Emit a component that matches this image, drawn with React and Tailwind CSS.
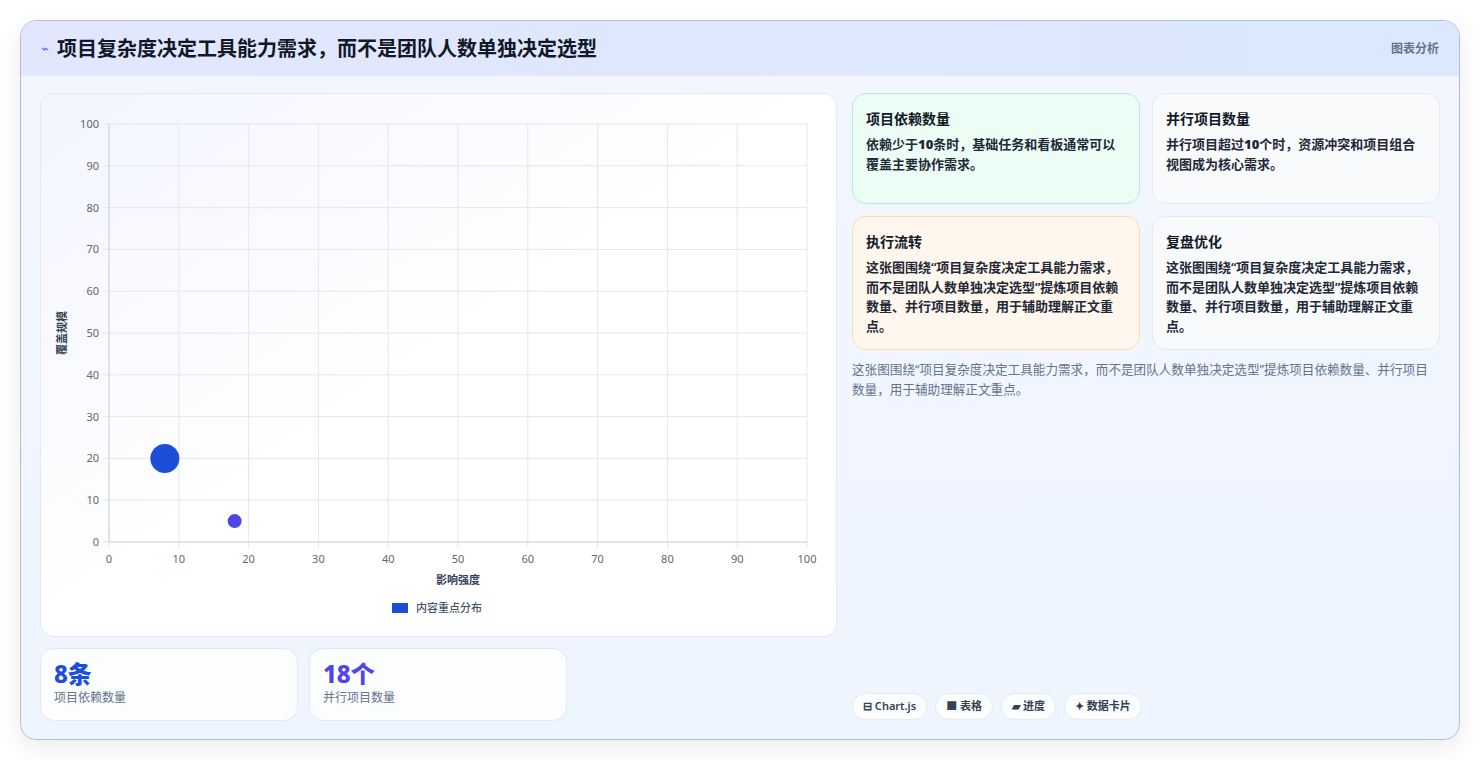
import React from "react";

const F = { fontFamily: '"Noto Sans","Noto Sans CJK SC",sans-serif' };

function Chart() {
  const x0 = 68, x1 = 766, y0 = 30, y1 = 448;
  const ticks = [0,10,20,30,40,50,60,70,80,90,100];
  const sx = v => x0 + (v/100)*(x1-x0);
  const sy = v => y1 - (v/100)*(y1-y0);
  return (
    <svg width="796" height="543" style={{fontFamily:'"Noto Sans","Noto Sans CJK SC",sans-serif'}}>
      {ticks.map(t => (
        <g key={t}>
          <line x1={sx(t)} x2={sx(t)} y1={y0} y2={y1+6} stroke="#e5e7eb" />
          <line x1={x0-6} x2={x1} y1={sy(t)} y2={sy(t)} stroke="#e5e7eb" />
          <text x={x0-10} y={sy(t)+4} textAnchor="end" fontSize="11" fill="#666">{t}</text>
          <text x={sx(t)} y={y1+21} textAnchor="middle" fontSize="11" fill="#666">{t}</text>
        </g>
      ))}
      <line x1={x0} x2={x0} y1={y0} y2={y1} stroke="#d1d5db" />
      <line x1={x0} x2={x1} y1={y1} y2={y1} stroke="#d1d5db" />
      <circle cx={sx(8)} cy={sy(20)} r="14.5" fill="#1d4ed8" />
      <circle cx={sx(18)} cy={sy(5)} r="7" fill="#4f46e5" />
      <text x="417" y="490" textAnchor="middle" fontSize="11" fontWeight="600" fill="#334155">影响强度</text>
      <text transform="translate(25 239) rotate(-90)" textAnchor="middle" fontSize="11" fontWeight="600" fill="#334155">覆盖规模</text>
      <rect x="351" y="509" width="16" height="10" fill="#1d4ed8" />
      <text x="375" y="518" fontSize="11" fill="#475569" fontWeight="500">内容重点分布</text>
    </svg>
  );
}

const cards = [
  { t: "项目依赖数量", d: <>依赖少于<b>10</b>条时，基础任务和看板通常可以覆盖主要协作需求。</>, c: "bg-[#ecfdf5] border-[#b7ecd3]" },
  { t: "并行项目数量", d: <>并行项目超过<b>10</b>个时，资源冲突和项目组合视图成为核心需求。</>, c: "bg-[#f8fafc] border-[#e2e8f0]" },
  { t: "执行流转", d: "这张图围绕“项目复杂度决定工具能力需求，而不是团队人数单独决定选型”提炼项目依赖数量、并行项目数量，用于辅助理解正文重点。", c: "bg-[#fff7ed] border-[#fbdca8]" },
  { t: "复盘优化", d: "这张图围绕“项目复杂度决定工具能力需求，而不是团队人数单独决定选型”提炼项目依赖数量、并行项目数量，用于辅助理解正文重点。", c: "bg-[#f8fafc] border-[#e2e8f0]" },
];

export default function App() {
  return (
    <div className="w-[1480px] h-[760px] bg-white p-[20px] pb-0" style={F}>
      <div className="h-[720px] rounded-[16px] border border-[#aebde6] bg-gradient-to-b from-[#f3f6ff] to-[#eef5ff] overflow-hidden shadow-[0_8px_24px_rgba(0,0,0,0.08)] flex flex-col">
        <div className="h-[55px] bg-gradient-to-r from-[#e2e7ff] to-[#dbe8fd] flex items-center justify-between px-[20px] shrink-0">
          <div className="flex items-center gap-[8px]">
            <span className="text-[#4f6cf0] text-[13px]">⌁</span>
            <span className="text-[20px] font-bold text-[#111827]">项目复杂度决定工具能力需求，而不是团队人数单独决定选型</span>
          </div>
          <span className="text-[12px] font-semibold text-[#64748b]">图表分析</span>
        </div>
        <div className="flex gap-[15px] px-[19px] pt-[17px] flex-1">
          <div className="w-[797px] flex flex-col gap-[11px]">
            <div className="h-[544px] rounded-[14px] border border-[#e3e8f3] bg-gradient-to-br from-[#f3f5ff] via-white to-white overflow-hidden">
              <Chart />
            </div>
            <div className="flex gap-[11px]">
              {[["8条","项目依赖数量","text-[#1d4ed8]"],["18个","并行项目数量","text-[#4f46e5]"]].map(([v,l,c]) => (
                <div key={l} className="w-[258px] h-[73px] rounded-[14px] border border-[#e3e8f3] bg-white/80 px-[13px] pt-[10px]">
                  <div className={`text-[24px] leading-[30px] font-extrabold ${c}`}>{v}</div>
                  <div className="text-[12px] text-[#64748b]">{l}</div>
                </div>
              ))}
            </div>
          </div>
          <div className="flex-1 flex flex-col">
            <div className="grid grid-cols-2 gap-[12px]">
              {cards.map((c,i) => (
                <div key={i} className={`rounded-[14px] border px-[13px] pt-[14px] pb-[12px] ${c.c} ${i<2 ? "h-[111px]" : "h-[134px]"}`}>
                  <div className="text-[14px] font-bold text-[#111827] mb-[6px]">{c.t}</div>
                  <div className="text-[13px] leading-[19.5px] font-semibold text-[#1f2937]">{c.d}</div>
                </div>
              ))}
            </div>
            <div className="text-[12.6px] leading-[20px] text-[#64748b] mt-[10px]">这张图围绕“项目复杂度决定工具能力需求，而不是团队人数单独决定选型”提炼项目依赖数量、并行项目数量，用于辅助理解正文重点。</div>
            <div className="flex-1" />
            <div className="flex gap-[8px] mb-[19px]">
              {["⊟ Chart.js","■ 表格","▰ 进度","✦ 数据卡片"].map(t => (
                <span key={t} className="h-[27px] px-[10px] rounded-full bg-white/80 border border-[#e5eaf3] text-[11px] font-semibold text-[#334155] flex items-center">{t}</span>
              ))}
            </div>
          </div>
        </div>
      </div>
    </div>
  );
}
